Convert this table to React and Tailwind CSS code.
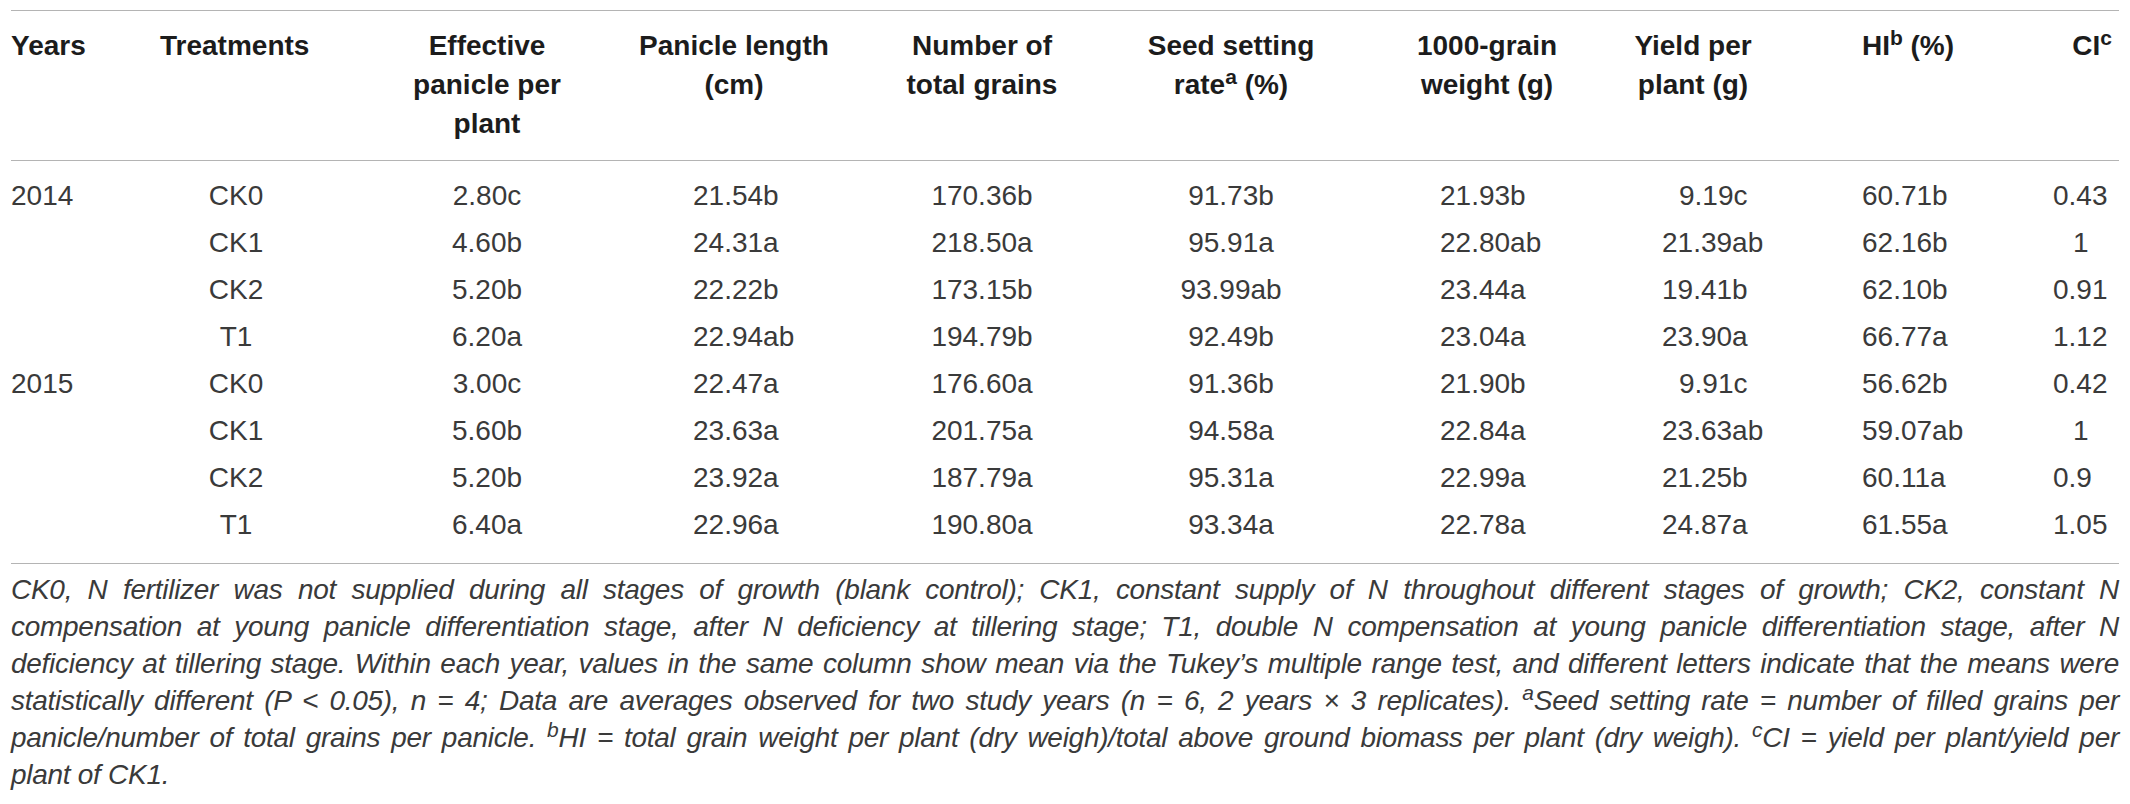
import React from 'react';

const ROWS = [
  { year: '2014', t: 'CK0', v: ['2.80c', '21.54b', '170.36b', '91.73b', '21.93b', '9.19c', '60.71b', '0.43'] },
  { year: '', t: 'CK1', v: ['4.60b', '24.31a', '218.50a', '95.91a', '22.80ab', '21.39ab', '62.16b', '1'] },
  { year: '', t: 'CK2', v: ['5.20b', '22.22b', '173.15b', '93.99ab', '23.44a', '19.41b', '62.10b', '0.91'] },
  { year: '', t: 'T1', v: ['6.20a', '22.94ab', '194.79b', '92.49b', '23.04a', '23.90a', '66.77a', '1.12'] },
  { year: '2015', t: 'CK0', v: ['3.00c', '22.47a', '176.60a', '91.36b', '21.90b', '9.91c', '56.62b', '0.42'] },
  { year: '', t: 'CK1', v: ['5.60b', '23.63a', '201.75a', '94.58a', '22.84a', '23.63ab', '59.07ab', '1'] },
  { year: '', t: 'CK2', v: ['5.20b', '23.92a', '187.79a', '95.31a', '22.99a', '21.25b', '60.11a', '0.9'] },
  { year: '', t: 'T1', v: ['6.40a', '22.96a', '190.80a', '93.34a', '22.78a', '24.87a', '61.55a', '1.05'] },
];

const GRID = 'grid grid-cols-[149px_203px_248px_246px_250px_248px_264px_148px_282px_70px]';

// where each value sits inside its column
function cellClass(col, value) {
  if (col === 0) return 'text-center';
  if (col === 1) return 'pl-[82px]';
  if (col === 2) return 'text-center';
  if (col === 3) return 'text-center';
  if (col === 4) return 'pl-[85px]';
  if (col === 5) return value.startsWith('9.') ? 'pl-[60px]' : 'pl-[43px]';
  if (col === 6) return 'pl-[95px]';
  return value === '1' ? 'pl-[24px]' : 'pl-[4px]';
}

function FootLine({ children, last }) {
  return (
    <div className={last ? 'whitespace-nowrap' : 'whitespace-nowrap text-justify [text-align-last:justify]'}>
      {children}
    </div>
  );
}

export default function App() {
  return (
    <div className="w-[2130px] h-[804px] bg-white overflow-hidden font-['Liberation_Sans',Arial,sans-serif] text-[28px]">
      <div className="mx-[11px] pt-[10px]">
        <div className={`${GRID} border-t border-[#b4b4b4] pt-[15px] pb-[17px] leading-[39px] font-bold text-[#1c1c1c]`}>
          <div>Years</div>
          <div>Treatments</div>
          <div className="text-center">Effective<br />panicle per<br />plant</div>
          <div className="text-center">Panicle length<br />(cm)</div>
          <div className="text-center">Number of<br />total grains</div>
          <div className="text-center">Seed setting<br />rate<sup>a</sup> (%)</div>
          <div className="text-center">1000-grain<br />weight (g)</div>
          <div className="text-center">Yield per<br />plant (g)</div>
          <div className="text-center">HI<sup>b</sup> (%)</div>
          <div className="text-right pr-[7px]">CI<sup>c</sup></div>
        </div>

        <div className="border-t border-[#b4b4b4] pt-[11px] pb-[15px] text-[#3a3a3a]">
          {ROWS.map((row, i) => (
            <div key={i} className={`${GRID} h-[47px] leading-[47px] whitespace-nowrap`}>
              <div>{row.year}</div>
              <div className="w-[152px] text-center">{row.t}</div>
              {row.v.map((val, c) => (
                <div key={c} className={cellClass(c, val)}>{val}</div>
              ))}
            </div>
          ))}
        </div>

        <div className="border-t border-[#b4b4b4] pt-[7px] italic leading-[37px] text-[#3a3a3a] tracking-[-0.01em]">
          <FootLine>CK0, N fertilizer was not supplied during all stages of growth (blank control); CK1, constant supply of N throughout different stages of growth; CK2, constant N</FootLine>
          <FootLine>compensation at young panicle differentiation stage, after N deficiency at tillering stage; T1, double N compensation at young panicle differentiation stage, after N</FootLine>
          <FootLine>deficiency at tillering stage. Within each year, values in the same column show mean via the Tukey’s multiple range test, and different letters indicate that the means were</FootLine>
          <FootLine>statistically different (P &lt; 0.05), n = 4; Data are averages observed for two study years (n = 6, 2 years × 3 replicates). <sup>a</sup>Seed setting rate = number of filled grains per</FootLine>
          <FootLine>panicle/number of total grains per panicle. <sup>b</sup>HI = total grain weight per plant (dry weigh)/total above ground biomass per plant (dry weigh). <sup>c</sup>CI = yield per plant/yield per</FootLine>
          <FootLine last>plant of CK1.</FootLine>
        </div>
      </div>
    </div>
  );
}
